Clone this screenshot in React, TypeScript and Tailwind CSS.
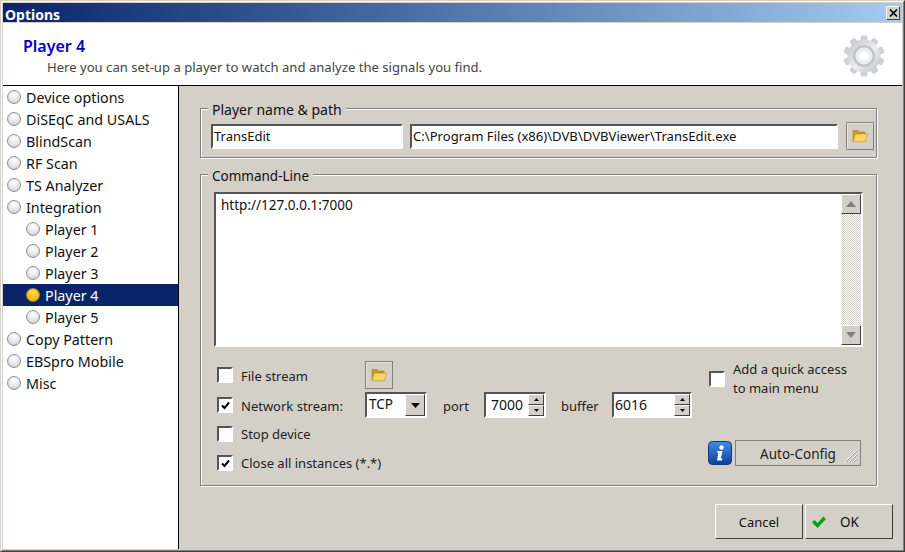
import React from "react";

const font = "font-['Noto_Sans','Open_Sans',sans-serif]";
const sunken = "border-2 border-t-[#555] border-l-[#555] border-r-white border-b-white bg-white";
const raised = "border border-t-white border-l-white border-r-[#404040] border-b-[#404040] bg-[#d4d0c8]";

function Folder() {
  return (
    <svg width="16" height="14" viewBox="0 0 16 14">
      <path d="M1 3 L1 1.5 L6 1.5 L7 3 L13 3 L13 5 L3 5 L1 12 Z" fill="#c9982e" stroke="#a87c1c" strokeWidth="0.6" />
      <path d="M3.2 5 L15.5 5 L13.5 12.8 L1 12.8 Z" fill="#fbd65c" stroke="#b8902a" strokeWidth="0.6" />
    </svg>
  );
}

function Gear() {
  const teeth = Array.from({ length: 10 }, (_, i) => i * 36);
  return (
    <svg width="42" height="42" viewBox="0 0 42 42">
      <defs>
        <linearGradient id="g" x1="0" y1="0" x2="1" y2="1">
          <stop offset="0" stopColor="#c0c3c6" />
          <stop offset="0.55" stopColor="#eceef0" />
          <stop offset="1" stopColor="#b8bcc0" />
        </linearGradient>
      </defs>
      {teeth.map((a) => (
        <rect key={a} x="17.5" y="0.5" width="7" height="8" rx="2" fill="#cdd0d2" transform={`rotate(${a} 21 21)`} />
      ))}
      <circle cx="21" cy="21" r="16.5" fill="url(#g)" />
      <circle cx="21" cy="21" r="11" fill="#c2c5c8" />
      <circle cx="21" cy="21" r="8.5" fill="#eceef0" />
      <circle cx="21" cy="21" r="5" fill="#ffffff" />
    </svg>
  );
}

function Radio({ active }: { active?: boolean }) {
  return active ? (
    <span className="h-[14px] w-[14px] shrink-0 rounded-full border border-[#a9853a] bg-[radial-gradient(circle_at_50%_35%,#ffe15a,#fdb900_65%,#f29a00)]" />
  ) : (
    <span className="h-[14px] w-[14px] shrink-0 rounded-full border border-[#8f8f8f] bg-[radial-gradient(circle_at_50%_30%,#ffffff,#e6e6e6_55%,#bdbdbd)]" />
  );
}

function NavItem({ label, sub, active }: { label: string; sub?: boolean; active?: boolean }) {
  return (
    <div
      className={`flex h-[22px] items-center gap-[5px] text-[14.3px] ${sub ? "pl-[23px]" : "pl-1"} ${
        active ? "bg-[#0a246a] text-white" : "text-[#111]"
      }`}
    >
      <Radio active={active} />
      <span className="mt-[2px]">{label}</span>
    </div>
  );
}

function Check({ checked }: { checked?: boolean }) {
  return (
    <span className="flex h-[16px] w-[16px] shrink-0 items-center justify-center border-2 border-t-[#555] border-l-[#555] border-r-white border-b-white bg-white">
      {checked && (
        <svg width="9" height="9" viewBox="0 0 9 9">
          <path d="M1 4.5 L3.5 7 L8 1.5" fill="none" stroke="#000" strokeWidth="2" />
        </svg>
      )}
    </span>
  );
}

function Spin({ value, width, pad }: { value: string; width: string; pad: string }) {
  return (
    <div className={`flex h-[26px] ${width} items-stretch ${sunken}`}>
      <span className={`flex-1 text-[14px] leading-[21px] text-[#111] ${pad}`}>{value}</span>
      <div className="flex w-[16px] flex-col">
        {[0, 1].map((i) => (
          <span key={i} className={`flex flex-1 items-center justify-center ${raised}`}>
            <svg width="5" height="3" viewBox="0 0 5 3">
              <path d={i === 0 ? "M2.5 0 L5 3 L0 3 Z" : "M0 0 L5 0 L2.5 3 Z"} fill="#000" />
            </svg>
          </span>
        ))}
      </div>
    </div>
  );
}

function FlatFolder() {
  return (
    <div className="flex h-[28px] w-[28px] shrink-0 items-center justify-center border border-[#808080] shadow-[inset_1px_1px_0_#e8e6e0]">
      <Folder />
    </div>
  );
}

function Group({ title, legend, className, children }: { title: string; legend: string; className: string; children: React.ReactNode }) {
  return (
    <div className={`relative w-[677px] border border-[#808080] shadow-[inset_1px_1px_0_#fff,1px_1px_0_#fff] ${className}`}>
      <span className={`absolute left-[7px] bg-[#d4d0c8] px-1 leading-[19px] text-[#111] ${legend}`}>{title}</span>
      {children}
    </div>
  );
}

function ScrollBtn({ up }: { up?: boolean }) {
  return (
    <div className={`flex h-[20px] items-center justify-center ${raised}`}>
      <svg width="10" height="6" viewBox="0 0 10 6">
        <path d={up ? "M5 0 L10 6 L0 6 Z" : "M0 0 L10 0 L5 6 Z"} fill="#808080" />
      </svg>
    </div>
  );
}

export default function App() {
  return (
    <div className={`h-[552px] w-[905px] overflow-hidden border border-t-[#d4d0c8] border-l-[#d4d0c8] border-r-[#404040] border-b-[#404040] ${font}`}>
      <div className="h-full border border-t-white border-l-white border-r-[#808080] border-b-[#808080] bg-[#d4d0c8] p-px">
        <div className="flex h-[19px] items-start justify-between bg-gradient-to-r from-[#0a246a] to-[#a6caf0] pl-[2px] pr-[2px]">
          <span className="mt-[4px] text-[14px] font-bold leading-[15px] text-white">Options</span>
          <span className={`flex h-[14px] w-[14px] items-center justify-center self-center ${raised}`}>
            <svg width="9" height="8" viewBox="0 0 9 8">
              <path d="M1 0.5 L8 7.5 M8 0.5 L1 7.5" stroke="#000" strokeWidth="1.6" />
            </svg>
          </span>
        </div>
        <div className="mt-px flex h-[62px] items-start justify-between bg-white pl-[20px] pr-[17px]">
          <div className="pt-[13px]">
            <div className="text-[16px] font-semibold leading-[20px] text-[#0000cc]">Player 4</div>
            <div className="ml-[24px] mt-[2px] text-[13.1px] leading-[18px] text-[#444]">
              Here you can set-up a player to watch and analyze the signals you find.
            </div>
          </div>
          <div className="pt-[12px]">
            <Gear />
          </div>
        </div>
        <div className="flex h-[464px] border-t border-black">
          <div className="h-full w-[176px] shrink-0 border-r border-black bg-white">
            <NavItem label="Device options" />
            <NavItem label="DiSEqC and USALS" />
            <NavItem label="BlindScan" />
            <NavItem label="RF Scan" />
            <NavItem label="TS Analyzer" />
            <NavItem label="Integration" />
            <NavItem label="Player 1" sub />
            <NavItem label="Player 2" sub />
            <NavItem label="Player 3" sub />
            <NavItem label="Player 4" sub active />
            <NavItem label="Player 5" sub />
            <NavItem label="Copy Pattern" />
            <NavItem label="EBSpro Mobile" />
            <NavItem label="Misc" />
          </div>
          <div className="flex-1 pl-[21px] pt-[22px]">
            <Group title="Player name & path" legend="-top-[9px] text-[14px]" className="h-[50px]">
              <div className="flex items-center pl-[10px] pt-[13px]">
                <div className={`h-[25px] w-[192px] ${sunken} pl-[1px] text-[13px] leading-[20px] text-[#111]`}>TransEdit</div>
                <div className={`ml-[7px] h-[25px] w-[428px] ${sunken} pl-[1px] text-[13.1px] leading-[20px] text-[#111]`}>
                  {"C:\\Program Files (x86)\\DVB\\DVBViewer\\TransEdit.exe"}
                </div>
                <div className="ml-[8px]">
                  <FlatFolder />
                </div>
              </div>
            </Group>
            <Group title="Command-Line" legend="-top-[8px] text-[13.5px]" className="mt-[16px] h-[312px]">
              <div className="pl-[13px] pt-[17px]">
                <div className={`flex h-[155px] w-[649px] ${sunken}`}>
                  <div className="flex-1 pl-[5px] pt-[2px] text-[13.5px] leading-[19px] text-[#111]">http://127.0.0.1:7000</div>
                  <div className="flex w-[20px] flex-col justify-between bg-[repeating-conic-gradient(#d4d0c8_0_25%,#ffffff_0_50%)] bg-[length:2px_2px]">
                    <ScrollBtn up />
                    <ScrollBtn />
                  </div>
                </div>
                <div className="mt-[14px] flex text-[13px] text-[#222]">
                  <div className="ml-[3px] w-[475px]">
                    <div className="flex h-[28px] items-center">
                      <Check />
                      <span className="ml-[8px] mt-[4px] w-[124px]">File stream</span>
                      <FlatFolder />
                    </div>
                    <div className="mt-[3px] flex h-[26px] items-center">
                      <Check checked />
                      <span className="ml-[8px] mt-[4px] w-[124px]">Network stream:</span>
                      <div className={`flex h-[26px] w-[62px] ${sunken}`}>
                        <span className="flex-1 pl-[2px] text-[13.5px] leading-[20px] text-[#111]">TCP</span>
                        <span className={`flex w-[20px] items-center justify-center ${raised}`}>
                          <svg width="9" height="5" viewBox="0 0 9 5">
                            <path d="M0 0 L9 0 L4.5 5 Z" fill="#000" />
                          </svg>
                        </span>
                      </div>
                      <span className="ml-[16px] mt-[4px] w-[41px]">port</span>
                      <Spin value="7000" width="w-[62px]" pad="pl-[5px]" />
                      <span className="ml-[15px] mt-[4px] w-[51px]">buffer</span>
                      <Spin value="6016" width="w-[80px]" pad="pl-[1px]" />
                    </div>
                    <div className="mt-[5px] flex h-[22px] items-center">
                      <Check />
                      <span className="ml-[8px] mt-[2px]">Stop device</span>
                    </div>
                    <div className="mt-[7px] flex h-[22px] items-center">
                      <Check checked />
                      <span className="ml-[8px] mt-[2px]">Close all instances (*.*)</span>
                    </div>
                  </div>
                </div>
              </div>
              <div className="absolute left-[507px] top-[185px] flex w-[153px] flex-col">
                <div className="flex items-center pl-[1px] text-[13px] leading-[19px] text-[#222]">
                  <Check />
                  <span className="ml-[8px]">
                    Add a quick access
                    <br />
                    to main menu
                  </span>
                </div>
                <div className="mt-[42px] flex items-center">
                  <svg width="24" height="24" viewBox="0 0 24 24" className="shrink-0">
                    <defs>
                      <linearGradient id="i" x1="0" y1="0" x2="0" y2="1">
                        <stop offset="0" stopColor="#3f8fe8" />
                        <stop offset="1" stopColor="#0c3f9e" />
                      </linearGradient>
                    </defs>
                    <rect x="0.5" y="0.5" width="23" height="23" rx="4" fill="url(#i)" stroke="#16386f" />
                    <circle cx="13.5" cy="6.5" r="2.2" fill="#fff" />
                    <path d="M9.5 10 L14.5 10 L12.8 17.5 L14.5 17.5 L14 19.5 L9 19.5 L10.3 12 L9.2 12 Z" fill="#fff" />
                  </svg>
                  <div className="relative ml-[3px] flex h-[26px] w-[126px] items-center justify-center border border-[#808080] pt-[2px] text-[13.5px] text-[#222]">
                    Auto-Config
                    <svg width="14" height="14" viewBox="0 0 14 14" className="absolute bottom-[2px] right-[2px]">
                      <path d="M1 13 L13 1 M5 13 L13 5 M9 13 L13 9" stroke="#fff" strokeWidth="1" />
                      <path d="M2 13 L13 2 M6 13 L13 6 M10 13 L13 10" stroke="#999" strokeWidth="1" />
                    </svg>
                  </div>
                </div>
              </div>
            </Group>
            <div className="mt-[18px] flex w-[693px] justify-end gap-[2px] text-[13px] text-[#111]">
              <div className={`flex h-[35px] w-[88px] items-center justify-center pt-[2px] ${raised}`}>Cancel</div>
              <div className={`flex h-[35px] w-[88px] items-center pl-[5px] ${raised}`}>
                <svg width="16" height="14" viewBox="0 0 16 14">
                  <path d="M1 7.5 L3.5 5 L6.5 8 L12.5 1.5 L15 4 L6.5 13 Z" fill="#0da00d" />
                </svg>
                <span className="ml-[13px] mt-[2px] text-[13.5px]">OK</span>
              </div>
            </div>
          </div>
        </div>
      </div>
    </div>
  );
}
